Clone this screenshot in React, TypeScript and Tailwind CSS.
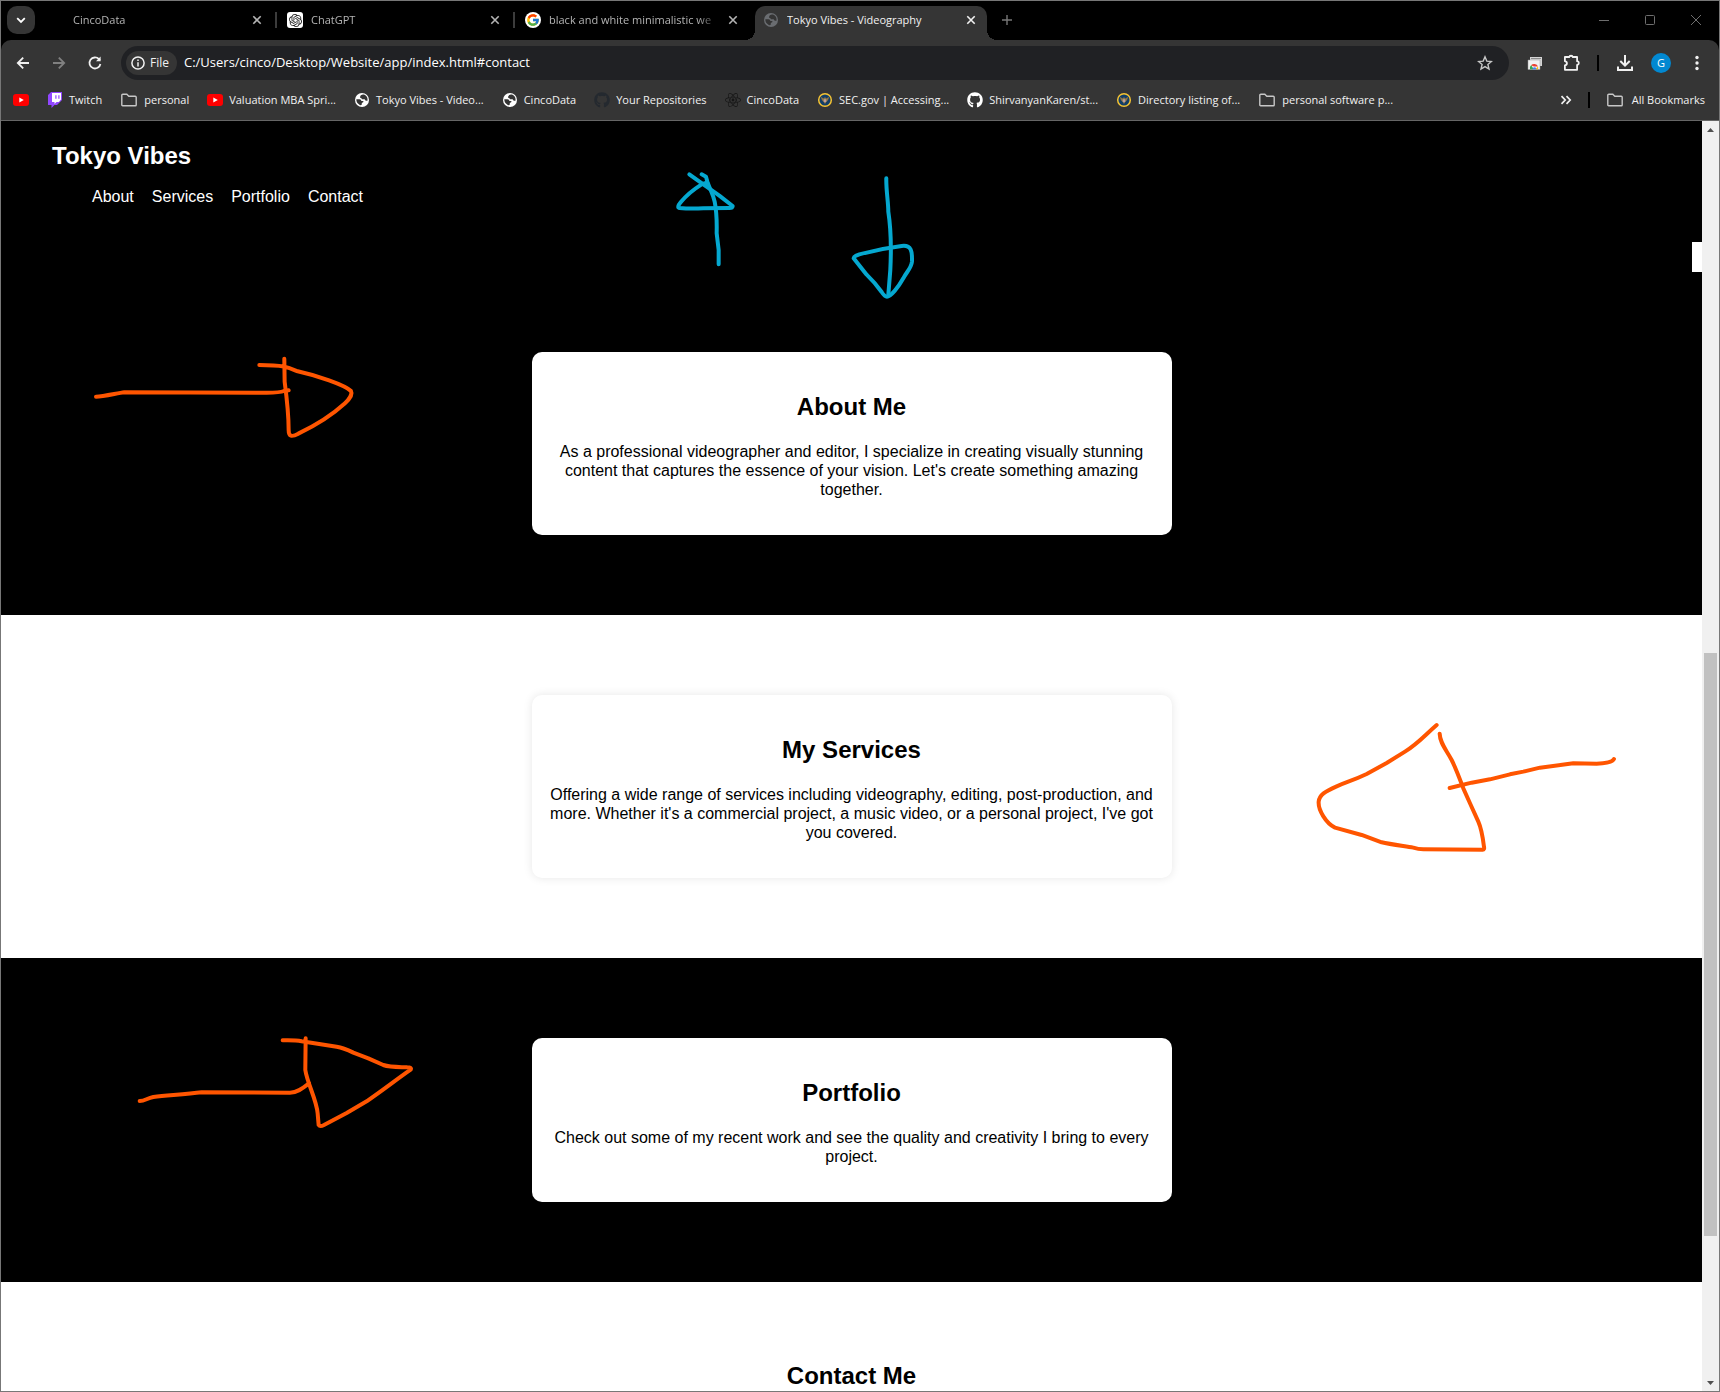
import type { ReactNode } from "react";
import { FaGithub, FaReact } from "react-icons/fa";
import { FcGoogle } from "react-icons/fc";
import { SiOpenai } from "react-icons/si";

function YouTubeIcon() {
  return (
    <svg width="16" height="16" viewBox="0 0 16 16" className="shrink-0">
      <rect y="2" width="16" height="12" rx="3" fill="#ff0000" />
      <path d="M6.3 5.4v5.2L10.8 8z" fill="#fff" />
    </svg>
  );
}

function TwitchIcon() {
  return (
    <svg width="16" height="16" viewBox="0 0 16 16" className="shrink-0">
      <path d="M4 0 1 3v10h3.500v3L7.500 13H10l5-5V0z" fill="#9146ff" />
      <path d="M5 1h9v6.500L11.800 10H9.500L7.500 12v-2H5z" fill="#fff" />
      <path d="M8.300 3.200h1.200v3.600H8.300zM11.300 3.200h1.200v3.600h-1.200z" fill="#9146ff" />
    </svg>
  );
}

function FolderIcon() {
  return (
    <svg width="18" height="16" viewBox="-1 0 18 16" className="shrink-0" fill="none" stroke="#c7c7c7" strokeWidth="1.4">
      <path d="M.8 13V3.300a1 1 0 0 1 1-1h4l2 2h6.400a1 1 0 0 1 1 1V13a.8.8 0 0 1-.8.8H1.600A.8.8 0 0 1 .8 13z" />
    </svg>
  );
}

function GlobeIcon({ disc, land }: { disc: string; land: string }) {
  return (
    <svg width="16" height="16" viewBox="0 0 16 16" className="shrink-0">
      <circle cx="8" cy="8" r="7" fill={disc} />
      <path
        d="M2.300 7.300h3.200c1.200 0 1.800.8 1.800 1.600h1.600c.7 0 .8.900.2 1.300L7.800 11v1.400c-.6 1-2 .9-2.600.1C3.400 11.600 2.300 9.600 2.300 7.300z"
        fill={land}
      />
      <path d="M6.200 4.300c.5-.9 1.600-1.700 2.600-1.700h1.300c1 .4 2.300 1.300 3 2.600.5 1 .6 2.200.4 3.500h-1.300c-.9 0-1.400-.8-1.400-1.500H8.600c-.8 0-1.200-.5-1.200-1.300H6.200z" fill={land} />
    </svg>
  );
}

function SealIcon() {
  return (
    <svg width="16" height="16" viewBox="0 0 16 16" className="shrink-0">
      <circle cx="8" cy="8" r="6.300" fill="#123e68" stroke="#f5c332" strokeWidth="1.500" />
      <path d="M4 4.800c.2 2 .8 3.800 2.600 5L8 12l1.400-2.200c1.800-1.200 2.400-3 2.600-5L9.600 6.400 8 5.200 6.400 6.400z" fill="#8f7448" />
      <path d="M6.800 7.500h2.400v1.800L8 10.500 6.800 9.300z" fill="#c9c6c0" />
      <path d="M7.200 8.500h.5v1h-.5zM8.300 8.500h.5v1h-.5z" fill="#b3252c" />
    </svg>
  );
}

function CloseIcon() {
  return (
    <svg width="16" height="16" viewBox="0 0 16 16" fill="none" stroke="currentColor" strokeWidth="1.600">
      <path d="M4.300 4.300l7.400 7.400M11.700 4.300l-7.400 7.400" />
    </svg>
  );
}

type TabProps = { title: string; icon?: ReactNode; active?: boolean };

function Tab({ title, icon, active }: TabProps) {
  return (
    <div
      className={
        active
          ? "relative flex w-[232px] items-center rounded-t-[10px] bg-[#353535] px-2 text-[#f1f1f1]"
          : "flex w-[232px] items-center px-2 text-[#b4b4b4]"
      }
    >
      {active && (
        <>
          <span className="absolute bottom-0 -left-[10px] size-[10px] bg-[radial-gradient(circle_at_top_left,#000_10px,#353535_10px)]" />
          <span className="absolute -right-[10px] bottom-0 size-[10px] bg-[radial-gradient(circle_at_top_right,#000_10px,#353535_10px)]" />
        </>
      )}
      <button type="button" className="flex min-w-0 flex-1 items-center gap-2 pb-[6px] text-left">
        <span className="size-4 shrink-0">{icon}</span>
        <span
          className={
            active
              ? "min-w-0 flex-1 overflow-hidden whitespace-nowrap"
              : "min-w-0 flex-1 overflow-hidden whitespace-nowrap [mask-image:linear-gradient(to_right,#000_148px,transparent_172px)]"
          }
        >
          {title}
        </span>
      </button>
      <button type="button" aria-label={`Close ${title}`} className="mb-[6px] shrink-0">
        <CloseIcon />
      </button>
    </div>
  );
}

function TabSeparator({ hidden }: { hidden?: boolean }) {
  return <span className={hidden ? "w-[6px]" : "mx-[2px] mt-[6px] h-4 w-[2px] bg-[#3c3c3c]"} />;
}

function TabStrip() {
  return (
    <div className="flex h-[39px] shrink-0 bg-black pt-[5px] pl-[6px] text-[11px] leading-4">
      <button
        type="button"
        aria-label="Search tabs"
        className="mr-[6px] flex size-7 shrink-0 items-center justify-center rounded-[10px] bg-[#353535] text-white"
      >
        <svg width="10" height="10" viewBox="0 0 10 10" fill="none" stroke="currentColor" strokeWidth="1.800">
          <path d="M1.200 3.200 5 7l3.800-3.800" />
        </svg>
      </button>
      <Tab title="CincoData" />
      <TabSeparator />
      <Tab
        title="ChatGPT"
        icon={
          <span className="flex size-4 items-center justify-center rounded-[3px] bg-white text-[#222]">
            <SiOpenai size={13} />
          </span>
        }
      />
      <TabSeparator />
      <Tab
        title="black and white minimalistic we"
        icon={
          <span className="flex size-4 items-center justify-center rounded-full bg-white">
            <FcGoogle size={14} />
          </span>
        }
      />
      <TabSeparator hidden />
      <Tab active title="Tokyo Vibes - Videography" icon={<GlobeIcon disc="#6a6d71" land="#353535" />} />
      <button type="button" aria-label="New tab" className="ml-3 flex h-7 w-4 items-center justify-center text-[#777]">
        <svg width="12" height="12" viewBox="0 0 12 12" fill="none" stroke="currentColor" strokeWidth="1.400">
          <path d="M6 1v10M1 6h10" />
        </svg>
      </button>
      <div className="ml-auto flex h-7 items-center text-[#6e6e6e]">
        <button type="button" aria-label="Minimize" className="flex w-[46px] justify-center">
          <svg width="10" height="10" viewBox="0 0 10 10" stroke="currentColor">
            <path d="M0 5.500h10" />
          </svg>
        </button>
        <button type="button" aria-label="Maximize" className="flex w-[46px] justify-center">
          <svg width="10" height="10" viewBox="0 0 10 10" fill="none" stroke="currentColor">
            <rect x=".5" y=".5" width="9" height="9" rx="1" />
          </svg>
        </button>
        <button type="button" aria-label="Close window" className="flex w-[46px] justify-center">
          <svg width="10" height="10" viewBox="0 0 10 10" stroke="currentColor">
            <path d="M0 0l10 10M10 0 0 10" />
          </svg>
        </button>
      </div>
    </div>
  );
}

function Toolbar() {
  return (
    <div className="bg-black">
      <div className="flex items-center rounded-t-[10px] bg-[#353535] px-[14px] pt-[6px] text-[#f1f1f1]">
        <div className="flex w-[106px] shrink-0 items-center gap-5">
          <button type="button" aria-label="Back">
            <svg width="16" height="16" viewBox="0 0 16 16" fill="none" stroke="currentColor" strokeWidth="1.800">
              <path d="M14 8H3M8.200 2.600 2.800 8l5.400 5.400" />
            </svg>
          </button>
          <button type="button" aria-label="Forward" className="text-[#808080]">
            <svg width="16" height="16" viewBox="0 0 16 16" fill="none" stroke="currentColor" strokeWidth="1.800">
              <path d="M2 8h11M7.800 2.600 13.200 8l-5.400 5.400" />
            </svg>
          </button>
          <button type="button" aria-label="Reload">
            <svg width="16" height="16" viewBox="0 0 16 16" fill="none" stroke="currentColor" strokeWidth="1.800">
              <path d="M13.400 9A5.500 5.500 0 1 1 12 4.200l1 1" />
              <path d="M13.600 1.500v4.700H9z" fill="currentColor" stroke="none" />
            </svg>
          </button>
        </div>
        <div className="flex h-[34px] min-w-0 flex-1 items-center rounded-full bg-[#202124] pr-4 pl-[5px]">
          <button type="button" className="flex h-6 shrink-0 items-center gap-[5px] rounded-full bg-[#353535] pr-2 pl-[5px] text-xs">
            <svg width="14" height="14" viewBox="0 0 14 14" fill="none" stroke="currentColor" strokeWidth="1.500">
              <circle cx="7" cy="7" r="6.100" />
              <path d="M7 6.200v4.200M7 3.500v1.500" />
            </svg>
            File
          </button>
          <input
            type="text"
            aria-label="Address"
            defaultValue="C:/Users/cinco/Desktop/Website/app/index.html#contact"
            className="ml-[7px] min-w-0 flex-1 bg-transparent text-[13px] text-white outline-none"
          />
          <button type="button" aria-label="Bookmark this page" className="text-[#c7c7c7]">
            <svg width="16" height="16" viewBox="0 0 16 16" fill="none" stroke="currentColor" strokeWidth="1.400">
              <path d="M8 1.800l1.800 4.300 4.600.4-3.500 3 1.100 4.500L8 11.600 4 14l1.100-4.500-3.500-3 4.600-.4z" />
            </svg>
          </button>
        </div>
        <div className="flex shrink-0 items-center pl-[18px]">
          <button type="button" aria-label="Window capture extension">
            <svg width="16" height="16" viewBox="0 0 16 16">
              <path d="M3 2h12v9H3z" fill="#d5d5d5" />
              <path d="M4 3h10v1H4z" fill="#8b8b8b" />
              <path d="M1 5h12v9.500H1z" fill="#f2f2f2" stroke="#999" strokeWidth=".5" />
              <path d="M3 14.300a4 4 0 0 1 1.200-4.200l2 3.400-.3.800z" fill="#34a853" />
              <path d="M4 10.300a4.200 4.200 0 0 1 7 1.200H7z" fill="#ea4335" />
              <path d="M11 11.500a4 4 0 0 1 0 2.800H8.500z" fill="#fbbc04" />
              <path d="M5.500 14.300a2 2 0 1 1 4 0z" fill="#4285f4" />
            </svg>
          </button>
          <button type="button" aria-label="Extensions" className="ml-5">
            <svg width="18" height="18" viewBox="0 0 18 18" fill="none" stroke="currentColor" strokeWidth="1.800">
              <path d="M1.900 3h4.400c.1-1.700 3.300-1.700 3.400 0h4.400v4.200c2.300.2 2.300 3.500 0 3.700v4.900H1.900v-4.300c2.700-.5 2.700-3.800 0-4.300z" strokeLinejoin="round" />
            </svg>
          </button>
          <span className="ml-4 h-4 w-[2px] bg-black" />
          <button type="button" aria-label="Downloads" className="ml-[18px]">
            <svg width="16" height="16" viewBox="0 0 16 16" fill="none" stroke="currentColor" strokeWidth="2">
              <path d="M8 0v10.500M3.300 6 8 10.700 12.700 6M1 11.500V15h14v-3.500" />
            </svg>
          </button>
          <button
            type="button"
            aria-label="Profile"
            className="ml-[18px] flex size-5 items-center justify-center rounded-full bg-[#0288d1] text-[11px] text-white"
          >
            G
          </button>
          <button type="button" aria-label="Menu" className="ml-[18px]">
            <svg width="16" height="16" viewBox="0 0 16 16" fill="currentColor">
              <circle cx="8" cy="2.500" r="1.700" />
              <circle cx="8" cy="8" r="1.700" />
              <circle cx="8" cy="13.500" r="1.700" />
            </svg>
          </button>
        </div>
      </div>
    </div>
  );
}

const bookmarks: { label: string; icon: ReactNode }[] = [
  { label: "Twitch", icon: <TwitchIcon /> },
  { label: "personal", icon: <FolderIcon /> },
  { label: "Valuation MBA Spri...", icon: <YouTubeIcon /> },
  { label: "Tokyo Vibes - Video...", icon: <GlobeIcon disc="#fff" land="#353535" /> },
  { label: "CincoData", icon: <GlobeIcon disc="#fff" land="#353535" /> },
  { label: "Your Repositories", icon: <FaGithub size={16} color="#24292f" /> },
  { label: "CincoData", icon: <FaReact size={16} color="#161616" /> },
  { label: "SEC.gov | Accessing...", icon: <SealIcon /> },
  { label: "ShirvanyanKaren/st...", icon: <FaGithub size={16} color="#fff" /> },
  { label: "Directory listing of...", icon: <SealIcon /> },
  { label: "personal software p...", icon: <FolderIcon /> },
];

function BookmarksBar() {
  return (
    <nav
      aria-label="Bookmarks"
      className="flex h-[41px] shrink-0 items-center border-b border-[#666] bg-[#353535] pr-[14px] pl-3 text-[11px] whitespace-nowrap text-[#f1f1f1]"
    >
      <div className="flex items-center gap-[18px]">
        <a href="#youtube" aria-label="YouTube">
          <YouTubeIcon />
        </a>
        {bookmarks.map(({ label, icon }, i) => (
          <a key={i} href="#bookmark" className="flex items-center gap-[6px]">
            {icon}
            {label}
          </a>
        ))}
      </div>
      <div className="ml-auto flex items-center">
        <button type="button" aria-label="More bookmarks">
          <svg width="12" height="10" viewBox="0 0 12 10" fill="none" stroke="currentColor" strokeWidth="1.700">
            <path d="M1.500 1.200 5.200 5 1.500 8.800M6.500 1.200 10.200 5 6.500 8.800" />
          </svg>
        </button>
        <span className="mx-4 h-4 w-[2px] bg-black" />
        <button type="button" className="flex items-center gap-2">
          <FolderIcon />
          All Bookmarks
        </button>
      </div>
    </nav>
  );
}

function Card({ title, children }: { title: string; children: ReactNode }) {
  return (
    <div className="w-[640px] rounded-[10px] bg-white px-4 py-5 text-black shadow-[0_0_10px_rgba(0,0,0,0.1)]">
      <h2 className="my-[21px] text-2xl leading-7 font-bold">{title}</h2>
      <p className="mb-4 text-base leading-[19px]">{children}</p>
    </div>
  );
}

function Annotations() {
  return (
    <svg
      className="pointer-events-none absolute -top-px -left-px h-full w-full"
      fill="none"
      strokeWidth="12"
      strokeLinecap="round"
      strokeLinejoin="round"
    >
      <g stroke="#05a8d0">
        <g transform="translate(640 150) scale(.3333)">
          <path d="M148 73 190 103 238 137 278 168 Q280 174 268 174L190 175Q150 177 118 174 110 172 122 157 145 128 185 103L200 98" />
          <path d="M185 73 198 80 203 98C213 125 220 135 224 155 229 180 231 210 230 250L236 300V343" />
        </g>
        <g transform="translate(640 150) scale(.3333)">
          <path d="M739 85C738 120 745 155 745 185 752 230 755 280 751 360L745 435" />
          <path d="M741 440Q734 440 725 426 705 398 680 374L641 325Q642 318 658 313 720 296 785 288C815 284 817 305 816 335 814 355 800 365 790 385 775 412 752 440 741 440z" />
        </g>
      </g>
      <g stroke="#ff5500">
        <g transform="translate(70 340) scale(.3333)">
          <path d="M78 170C100 170 140 160 163 157L590 158C620 158 635 156 642 153L656 151" />
          <path d="M643 56 644 125C650 170 656 220 656 270 656 290 665 292 685 281 740 255 790 222 825 190 838 178 848 162 843 153 825 135 740 106 680 93 655 82 640 75 568 75" />
        </g>
        <g transform="translate(1290 700) scale(.3333)">
          <path d="M440 75C400 110 385 130 345 155L290 189 230 222C190 241 170 246 140 259 105 274 88 285 86 305 84 330 108 370 135 383L215 405 275 427C300 433 340 438 370 443Q385 448 400 448L578 449Q584 449 582 440C577 400 574 385 565 365L541 312 520 265C505 225 495 200 485 180 468 148 450 130 449 101" />
          <path d="M479 264 545 248 600 238 660 223 700 215 750 203 850 190 920 191C950 190 968 186 972 177" />
        </g>
        <g transform="translate(120 1020) scale(.3333)">
          <path d="M59 243C75 243 80 235 100 231 150 226 200 222 245 217L510 218C530 218 545 207 567 190" />
          <path d="M557 55 556 150C562 190 590 240 593 280L596 315Q600 321 612 315L680 279 740 244C790 210 830 178 872 149Q876 142 862 142C830 141 810 142 790 135L745 115 700 98C680 88 670 83 650 80L545 64C525 60 510 61 488 61" />
        </g>
      </g>
    </svg>
  );
}

function Scrollbar() {
  return (
    <div aria-hidden="true" className="flex w-[17px] shrink-0 flex-col bg-[#f0f0f0]">
      <div className="flex h-[17px] items-center justify-center">
        <svg width="7" height="4" viewBox="0 0 7 4">
          <path d="M0 4 3.500 0 7 4z" fill="#505050" />
        </svg>
      </div>
      <div className="grow-[515]" />
      <div className="mx-[2px] grow-[583] bg-[#c1c1c1]" />
      <div className="grow-[138]" />
      <div className="flex h-[17px] items-center justify-center">
        <svg width="7" height="4" viewBox="0 0 7 4">
          <path d="M0 0h7L3.500 4z" fill="#505050" />
        </svg>
      </div>
    </div>
  );
}

function Site() {
  return (
    <div className="min-w-0 flex-1 overflow-hidden bg-white text-center font-['Liberation_Sans',Arial,sans-serif]">
      <header className="flex justify-between bg-black text-left text-white">
        <div className="px-[51px] pt-[21px] pb-[65px]">
          <h1 className="text-2xl leading-7 font-bold">Tokyo Vibes</h1>
          <nav className="mt-[17px] ml-10 flex gap-[18px] text-base leading-5">
            <a href="#about">About</a>
            <a href="#services">Services</a>
            <a href="#portfolio">Portfolio</a>
            <a href="#contact">Contact</a>
          </nav>
        </div>
        <div className="h-[30px] w-[10px] self-end bg-white" />
      </header>
      <section id="about" className="flex justify-center bg-black py-20">
        <Card title="About Me">
          As a professional videographer and editor, I specialize in creating visually stunning content that captures the
          essence of your vision. Let's create something amazing together.
        </Card>
      </section>
      <section id="services" className="flex justify-center bg-white py-20">
        <Card title="My Services">
          Offering a wide range of services including videography, editing, post-production, and more. Whether it's a
          commercial project, a music video, or a personal project, I've got you covered.
        </Card>
      </section>
      <section id="portfolio" className="flex justify-center bg-black py-20">
        <Card title="Portfolio">
          Check out some of my recent work and see the quality and creativity I bring to every project.
        </Card>
      </section>
      <section id="contact" className="bg-white pt-20 text-black">
        <h2 className="text-2xl leading-7 font-bold">Contact Me</h2>
      </section>
    </div>
  );
}

export default function App() {
  return (
    <div className="relative flex h-screen flex-col overflow-hidden border border-[#777] bg-black font-['Open_Sans','Noto_Sans',sans-serif]">
      <TabStrip />
      <Toolbar />
      <BookmarksBar />
      <main className="flex min-h-0 flex-1">
        <Site />
        <Scrollbar />
      </main>
      <Annotations />
    </div>
  );
}
